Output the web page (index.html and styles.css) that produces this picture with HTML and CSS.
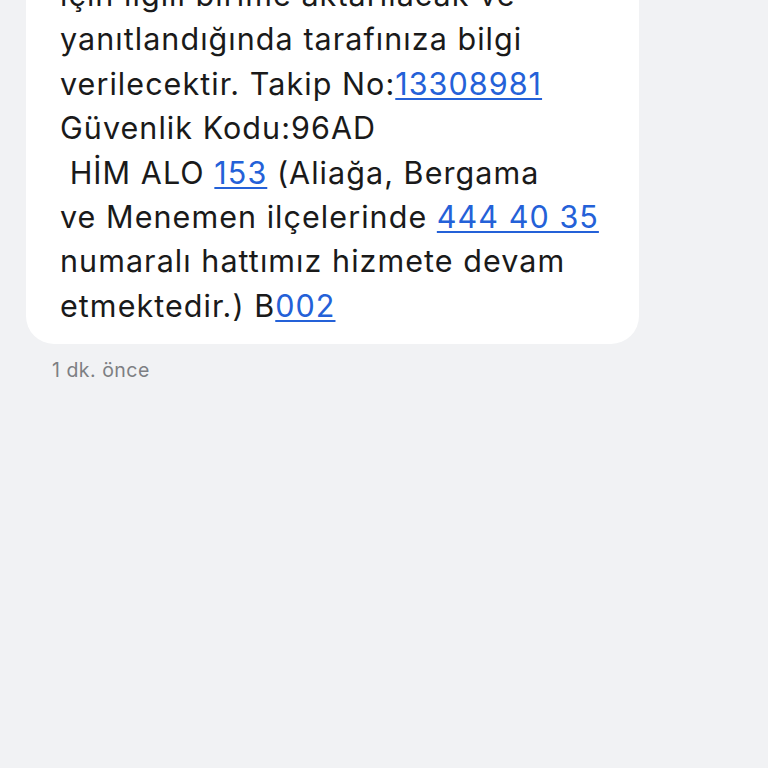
FILE: index.html
```html
<!DOCTYPE html>
<html lang="tr">
<head>
<meta charset="utf-8">
<title>Mesaj</title>
<link rel="stylesheet" href="styles.css">
</head>
<body>
<main class="thread">
  <div class="bubble">
    <p class="text">için ilgili birime aktarılacak ve<br>yanıtlandığında tarafınıza bilgi<br>verilecektir. Takip No:<a class="link" href="#">13308981</a><br>Güvenlik Kodu:96AD<br>&nbsp;HİM ALO <a class="link" href="#">153</a> (Aliağa, Bergama<br>ve Menemen ilçelerinde <a class="link" href="#">444 40 35</a><br>numaralı hattımız hizmete devam<br>etmektedir.) B<a class="link" href="#">002</a></p>
  </div>
  <div class="time">1 dk. önce</div>
</main>
</body>
</html>
```
FILE: styles.css
```css
html, body {
  margin: 0;
  padding: 0;
  background: #f1f2f4;
}
body {
  width: 768px;
  height: 768px;
  overflow: hidden;
  font-family: "Inter", "Noto Sans", sans-serif;
}
.thread {
  display: flex;
  flex-direction: column;
  align-items: flex-start;
  padding-left: 26px;
  margin-top: -27px;
}
.bubble {
  width: 613px;
  box-sizing: border-box;
  background: #ffffff;
  border-radius: 0 0 28px 28px;
  padding: 0 20px 16px 34px;
}
.text {
  margin: 0;
  font-size: 30.5px;
  letter-spacing: 1.05px;
  line-height: 44.4px;
  color: #1a1a1a;
  white-space: nowrap;
}
.link {
  color: #2461d8;
  text-decoration: underline;
  text-decoration-thickness: 1.5px;
  text-underline-offset: 3px;
}
.time {
  margin-top: 14px;
  padding-left: 26px;
  font-size: 19.5px;
  letter-spacing: 0.5px;
  color: #7d7f83;
}
```
